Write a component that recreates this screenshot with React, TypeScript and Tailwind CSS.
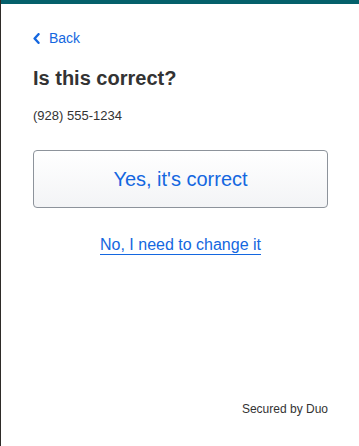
export default function App() {
  return (
    <div
      className="flex h-[446px] w-[359px] flex-col border-l border-[#2e2b28] bg-white"
      style={{ fontFamily: '"Liberation Sans", Arial, sans-serif' }}
    >
      <div className="h-[4px] w-full bg-[#04606b]" />
      <div className="flex flex-1 flex-col pl-[32px] pr-[31px] pt-[24px]">
        <a href="#" className="flex items-center gap-[9px] text-[14px] text-[#1467e0]">
          <svg width="7" height="11" viewBox="0 0 7 11" fill="none" aria-hidden>
            <path d="M5.5 1.2 L1.6 5.5 L5.5 9.8" stroke="#1467e0" strokeWidth="2.4" strokeLinecap="round" strokeLinejoin="round" />
          </svg>
          Back
        </a>
        <h1 className="mt-[17px] text-[20px] font-bold leading-[24px] text-[#333]">Is this correct?</h1>
        <p className="mt-[18px] text-[13px] leading-[16px] text-[#333]">(928) 555-1234</p>
        <button
          type="button"
          className="mt-[26px] flex h-[58px] w-full items-center justify-center rounded-[4px] border border-[#8d939b] bg-gradient-to-b from-white to-[#f3f4f6] text-[20px] text-[#1467e0]"
        >
          Yes, it's correct
        </button>
        <div className="mt-[28px] flex justify-center">
          <a href="#" className="border-b-[1.5px] border-[#1467e0] text-[16px] leading-[18px] text-[#1467e0]">
            No, I need to change it
          </a>
        </div>
        <div className="mt-auto mb-[28px] flex justify-end">
          <span className="text-[12px] text-[#333]">Secured by Duo</span>
        </div>
      </div>
    </div>
  );
}
